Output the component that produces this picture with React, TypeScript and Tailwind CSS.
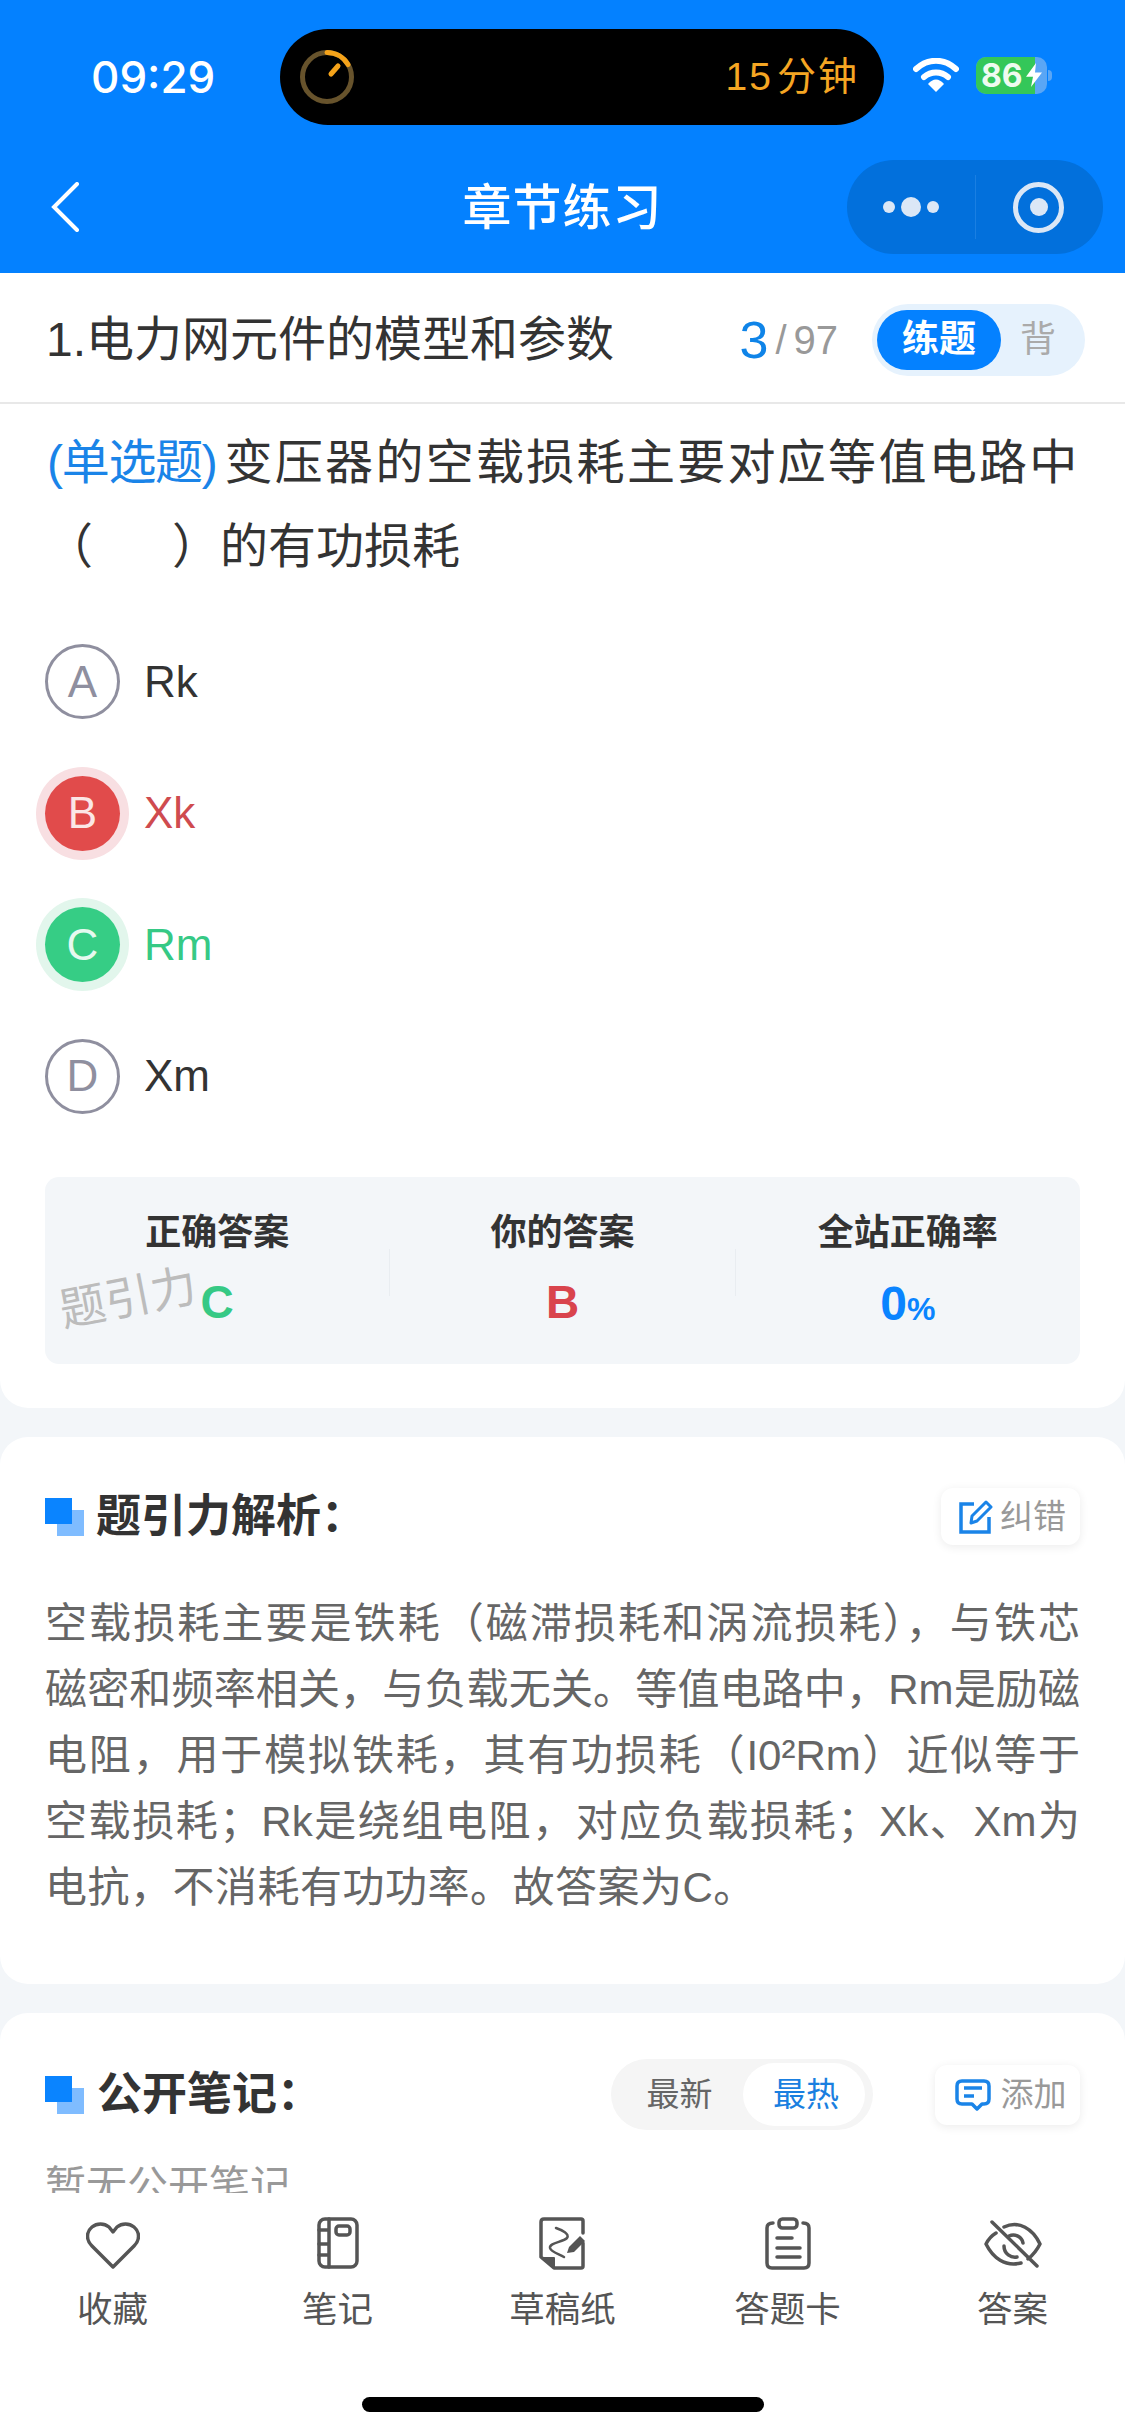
import React from "react";

const cjk = "font-['Liberation_Sans','Noto_Sans_CJK_SC',sans-serif]";

const options = [
  { letter: "A", text: "Rk", state: "idle" },
  { letter: "B", text: "Xk", state: "wrong" },
  { letter: "C", text: "Rm", state: "right" },
  { letter: "D", text: "Xm", state: "idle" },
];

const analysisLines = [
  "空载损耗主要是铁耗（磁滞损耗和涡流损耗），与铁芯",
  "磁密和频率相关，与负载无关。等值电路中，Rm是励磁",
  "电阻，用于模拟铁耗，其有功损耗（I0²Rm）近似等于",
  "空载损耗；Rk是绕组电阻，对应负载损耗；Xk、Xm为",
];

const OptionRow = ({ letter, text, state }: { letter: string; text: string; state: string }) => {
  let circle = "border-[3px] border-[#8f8f9f] text-[#8f8f9f]";
  let label = "text-[#333333]";
  if (state === "wrong") {
    circle = "bg-[#e14b4b] text-[#fbe6e6] shadow-[0_0_0_9px_#f8dfe2]";
    label = "text-[#cf4b4f]";
  }
  if (state === "right") {
    circle = "bg-[#36cd85] text-[#e6f9ef] shadow-[0_0_0_9px_#e2f6ec]";
    label = "text-[#36c985]";
  }
  return (
    <div className="flex h-[131.5px] items-center">
      <div className={`flex h-[75px] w-[75px] items-center justify-center rounded-full text-[44px] ${circle}`}>{letter}</div>
      <div className={`ml-[24px] text-[44px] ${label}`}>{text}</div>
    </div>
  );
};

const Stat = ({ title, children }: { title: string; children: React.ReactNode }) => (
  <div className="flex flex-1 flex-col items-center">
    <div className="text-[36px] leading-[52px] font-semibold text-[#333333]">{title}</div>
    <div className="mt-[9px] flex h-[52px] items-baseline font-bold">{children}</div>
  </div>
);

const SquareIcon = () => (
  <svg width="39" height="38" viewBox="0 0 39 38" className="shrink-0">
    <rect x="12" y="12" width="27" height="26" fill="#7fbcff" />
    <rect x="0" y="0" width="27" height="26" fill="#0a84ff" />
  </svg>
);

const NavItem = ({ label, children }: { label: string; children: React.ReactNode }) => (
  <div className="flex flex-1 flex-col items-center">
    <div className="flex h-[54px] items-center justify-center">{children}</div>
    <div className="mt-[15px] text-[35.5px] leading-[50px] text-[#555555]">{label}</div>
  </div>
);

const navStroke = { fill: "none", stroke: "#555555", strokeWidth: 3.5, strokeLinejoin: "round" as const, strokeLinecap: "round" as const };

export default function App() {
  return (
    <div className={`relative h-[2436px] w-[1125px] overflow-hidden bg-[#f3f6f9] ${cjk}`}>
      {/* top blue bar */}
      <div className="h-[273px] bg-[#0481ff] text-white">
        <div className="flex h-[160px] items-start">
          <div className="mt-[52px] ml-[91px] w-[189px] font-['Inter',sans-serif] text-[44px] leading-[50px] font-medium">09:29</div>
          <div className="mt-[29px] flex h-[96px] w-[604px] items-center justify-between rounded-[48px] bg-black pr-[25px] pl-[20px]">
            <svg width="54" height="54" viewBox="0 0 54 54">
              <circle cx="27" cy="27" r="24.5" fill="none" stroke="#67532c" strokeWidth="5" />
              <path d="M27 2.5 A24.5 24.5 0 0 1 48 14.5" fill="none" stroke="#f5a31a" strokeWidth="5" strokeLinecap="round" />
              <path d="M31 24 L38 16" fill="none" stroke="#f5a31a" strokeWidth="5" strokeLinecap="round" />
            </svg>
            <div className="text-[39px] leading-[48px] tracking-[2px] text-[#f5a623]">
              15<span className="ml-[4px]">分钟</span>
            </div>
          </div>
          <svg width="46" height="34" viewBox="0 0 46 34" className="mt-[58px] ml-[29px]">
            <path d="M3 11 C15 0 31 0 43 11" fill="none" stroke="white" strokeWidth="6" strokeLinecap="round" />
            <path d="M11 19 C18 13 28 13 35 19" fill="none" stroke="white" strokeWidth="6" strokeLinecap="round" />
            <path d="M15 26 C20 20 26 20 31 26 L23 34 Z" fill="white" />
          </svg>
          <div className="relative mt-[57px] ml-[17px] h-[37px] w-[71px] rounded-[10px] bg-[#5aa6f5]">
            <div className="h-full w-[59px] rounded-l-[10px] bg-[#34c759]" />
            <div className="absolute top-0 left-[5px] font-['Inter',sans-serif] text-[32px] leading-[37px] font-bold text-[#eefbf0]">86</div>
            <svg width="16" height="24" viewBox="0 0 16 28" preserveAspectRatio="none" className="absolute top-[6px] left-[50px]">
              <path d="M10 0 L0 16 H7 L5 28 L16 11 H9 Z" fill="white" />
            </svg>
          </div>
          <div className="mt-[70px] ml-[1px] h-[11px] w-[4px] rounded-r-full bg-[#5aa6f5]" />
        </div>
        <div className="relative flex h-[113px] items-start">
          <svg width="28" height="50" viewBox="0 0 28 50" className="mt-[22px] ml-[51px]">
            <path d="M26 2 L3 25 L26 48" fill="none" stroke="white" strokeWidth="4" strokeLinecap="round" strokeLinejoin="miter" />
          </svg>
          <div className="absolute top-[23px] left-0 w-full text-center text-[49px] leading-[50px] font-medium tracking-[1px]">章节练习</div>
          <div className="absolute top-0 left-[847px] flex h-[94px] w-[256px] items-center rounded-[47px] bg-[#0270dc]">
            <div className="flex w-[128px] items-center justify-center gap-[6px]">
              <span className="h-[12px] w-[12px] rounded-full bg-[#dbe7f6]" />
              <span className="h-[20px] w-[20px] rounded-full bg-[#dbe7f6]" />
              <span className="h-[12px] w-[12px] rounded-full bg-[#dbe7f6]" />
            </div>
            <div className="h-[64px] w-px bg-[#1a7fe2]" />
            <div className="flex flex-1 justify-center pr-[2px]">
              <div className="flex h-[51px] w-[51px] items-center justify-center rounded-full border-[5px] border-[#dbe7f6]">
                <span className="h-[18px] w-[18px] rounded-full bg-[#dbe7f6]" />
              </div>
            </div>
          </div>
        </div>
      </div>

      {/* question card */}
      <div className="h-[1135px] rounded-b-[28px] bg-white">
        <div className="flex h-[131px] items-center border-b-2 border-[#e8e8e8] pt-[5px] pr-[40px] pl-[46px]">
          <div className="flex-1 text-[48px] text-[#333333]">1.电力网元件的模型和参数</div>
          <span className="text-[52px] leading-none text-[#0f84e8]">3</span>
          <span className="mx-[7px] text-[40px] leading-none font-light text-[#999999]">/</span>
          <span className="text-[40px] leading-none text-[#999999]">97</span>
          <div className="ml-[34px] flex h-[72px] w-[213px] items-center rounded-[36px] bg-[#e6f2fd] pl-[5px]">
            <div className="flex h-[60px] w-[124px] items-center justify-center rounded-[30px] bg-[#0481ff] text-[37px] font-semibold text-white">练题</div>
            <div className="ml-[19px] text-[36px] text-[#aaaaaa]">背</div>
          </div>
        </div>
        <div className="px-[45px]">
          <div className="mt-[17px] text-[48px] leading-[84px] text-[#333333]">
            <div className="whitespace-nowrap tracking-[2.3px]">
              <span className="mr-[8px] ml-[2px] tracking-[-1.3px] text-[#1a84e8]">(单选题)</span>变压器的空载损耗主要对应等值电路中
            </div>
            <div className="whitespace-nowrap">
              （<span className="inline-block w-[79px]" />）的有功损耗
            </div>
          </div>
          <div className="mt-[27px]">
            {options.map((o) => (
              <OptionRow key={o.letter} letter={o.letter} text={o.text} state={o.state} />
            ))}
          </div>
          <div className="relative mt-[35px] flex h-[187px] rounded-[14px] bg-[#f3f6f9] pt-[30px]">
            <Stat title="正确答案">
              <span className="text-[46px] text-[#36c985]">C</span>
            </Stat>
            <div className="mt-[42px] h-[47px] w-px bg-[#e9edf1]" />
            <Stat title="你的答案">
              <span className="text-[46px] text-[#d9444d]">B</span>
            </Stat>
            <div className="mt-[42px] h-[47px] w-px bg-[#e9edf1]" />
            <Stat title="全站正确率">
              <span className="text-[48px] text-[#0a84ff]">0</span>
              <span className="text-[32px] text-[#0a84ff]">%</span>
            </Stat>
            <div className="absolute top-[98px] left-[14px] -rotate-[11deg] text-[46px] leading-none text-[#bcbcbc]">题引力</div>
          </div>
        </div>
      </div>

      {/* analysis card */}
      <div className="mt-[29px] h-[547px] rounded-[28px] bg-white px-[45px] pt-[51px]">
        <div className="flex h-[57px] items-center">
          <SquareIcon />
          <div className="ml-[12px] flex-1 text-[45px] font-bold text-[#333333]">题引力解析：</div>
          <div className="flex h-[57px] w-[139px] items-center justify-center gap-[7px] rounded-[12px] bg-white pl-[4px] shadow-[0_2px_10px_rgba(0,0,0,0.08)]">
            <svg width="34" height="34" viewBox="0 0 34 34" className="shrink-0">
              <path d="M15 4 H2 V32 H30 V17" fill="none" stroke="#1a84e8" strokeWidth="3.5" />
              <path d="M12 23 L13 16 L27 2 L32 7 L18 21 Z" fill="none" stroke="#1a84e8" strokeWidth="3" strokeLinejoin="round" />
            </svg>
            <span className="text-[33px] text-[#999999]">纠错</span>
          </div>
        </div>
        <div className="mt-[46px] text-[42px] leading-[66px] text-[#666666]">
          {analysisLines.map((line) => (
            <div key={line} className="whitespace-nowrap text-justify [text-align-last:justify]">
              {line}
            </div>
          ))}
          <div className="tracking-[0.5px]">电抗，不消耗有功功率。故答案为C。</div>
        </div>
      </div>

      {/* notes card */}
      <div className="mt-[29px] h-[600px] rounded-t-[28px] bg-white px-[45px] pt-[46px]">
        <div className="flex h-[71px] items-center">
          <SquareIcon />
          <div className="ml-[13px] flex-1 text-[45px] font-bold text-[#333333]">公开笔记：</div>
          <div className="flex h-[71px] w-[262px] items-center rounded-[36px] bg-[#f5f5f5] pr-[8px]">
            <div className="flex-1 pl-[5px] text-center text-[33px] text-[#666666]">最新</div>
            <div className="flex h-[63px] w-[122px] items-center justify-center rounded-[32px] bg-white pl-[4px] text-[33px] text-[#1a7fe0]">最热</div>
          </div>
          <div className="ml-[62px] flex h-[60px] w-[145px] items-center justify-center gap-[10px] rounded-[12px] bg-white pl-[6px] shadow-[0_2px_10px_rgba(0,0,0,0.08)]">
            <svg width="36" height="32" viewBox="0 0 36 32" className="shrink-0">
              <path d="M7 2 H29 Q34 2 34 7 V20 Q34 25 29 25 H27 L22 30 L17 25 H7 Q2 25 2 20 V7 Q2 2 7 2 Z" fill="none" stroke="#1a84e8" strokeWidth="3.5" strokeLinejoin="round" />
              <path d="M9 9 H27 M9 17 H19" fill="none" stroke="#1a84e8" strokeWidth="3.5" />
            </svg>
            <span className="text-[33px] text-[#999999]">添加</span>
          </div>
        </div>
        <div className="mt-[26px] text-[41px] leading-[60px] text-[#999999]">暂无公开笔记</div>
      </div>

      {/* bottom nav, lies over the notes card */}
      <div className="absolute right-0 bottom-0 left-0 h-[243px] bg-white pt-[23px]">
        <div className="flex">
          <NavItem label="收藏">
            <svg width="54" height="47" viewBox="0 0 54 47" className="mt-[4px]">
              <path d="M27 45 L6 24 C0 18 0 10 6 5 C11 1 18 1 23 5 L27 10 L31 5 C36 1 43 1 48 5 C54 10 54 18 48 24 Z" {...navStroke} />
            </svg>
          </NavItem>
          <NavItem label="笔记">
            <svg width="42" height="52" viewBox="0 0 42 52">
              <rect x="2" y="2" width="38" height="48" rx="6" {...navStroke} />
              <path d="M12 2 V50 M2 13 H12 M2 27 H12 M2 38 H12" {...navStroke} />
              <rect x="19" y="9" width="14" height="9" rx="3" {...navStroke} />
            </svg>
          </NavItem>
          <NavItem label="草稿纸">
            <svg width="47" height="53" viewBox="0 0 47 53">
              <path d="M44 16 V4 Q44 2 42 2 H5 Q2 2 2 5 V40 L15 51 H42 Q44 51 44 49 V26" {...navStroke} />
              <path d="M3 41 L15 41 L15 50 Z" fill="#555555" stroke="#555555" strokeWidth="2" strokeLinejoin="round" />
              <path d="M17 11 C23 13 31 17 28 21 C24 25 10 26 11 31 C12 35 20 37 25 40" fill="none" stroke="#555555" strokeWidth="2.5" strokeLinecap="round" />
              <path d="M28 36 L30 30 L41 19 L46 24 L35 35 Z" fill="#555555" />
            </svg>
          </NavItem>
          <NavItem label="答题卡">
            <svg width="46" height="53" viewBox="0 0 46 53">
              <path d="M8 6 Q2 6 2 11 V46 Q2 51 7 51 H39 Q44 51 44 46 V11 Q44 6 38 6" {...navStroke} />
              <rect x="14" y="2" width="18" height="9" rx="3.5" {...navStroke} />
              <path d="M12 21 H27 M12 31 H35 M12 40 H35" {...navStroke} />
            </svg>
          </NavItem>
          <NavItem label="答案">
            <svg width="58" height="48" viewBox="0 0 58 48" className="mt-[2px]">
              <path d="M20 7 C35 0 49 9 56 24 C53 30 49 35 44 39" {...navStroke} />
              <path d="M12 13 C7 16 4 20 2 24 C9 38 21 47 37 43" {...navStroke} />
              <path d="M25 16 C31 13 38 17 39 23" {...navStroke} />
              <path d="M20 26 C20 34 27 38 33 37" {...navStroke} />
              <path d="M8 2 L53 46" {...navStroke} />
            </svg>
          </NavItem>
        </div>
        <div className="absolute top-[204px] left-[362px] h-[15px] w-[402px] rounded-full bg-black" />
      </div>
    </div>
  );
}
